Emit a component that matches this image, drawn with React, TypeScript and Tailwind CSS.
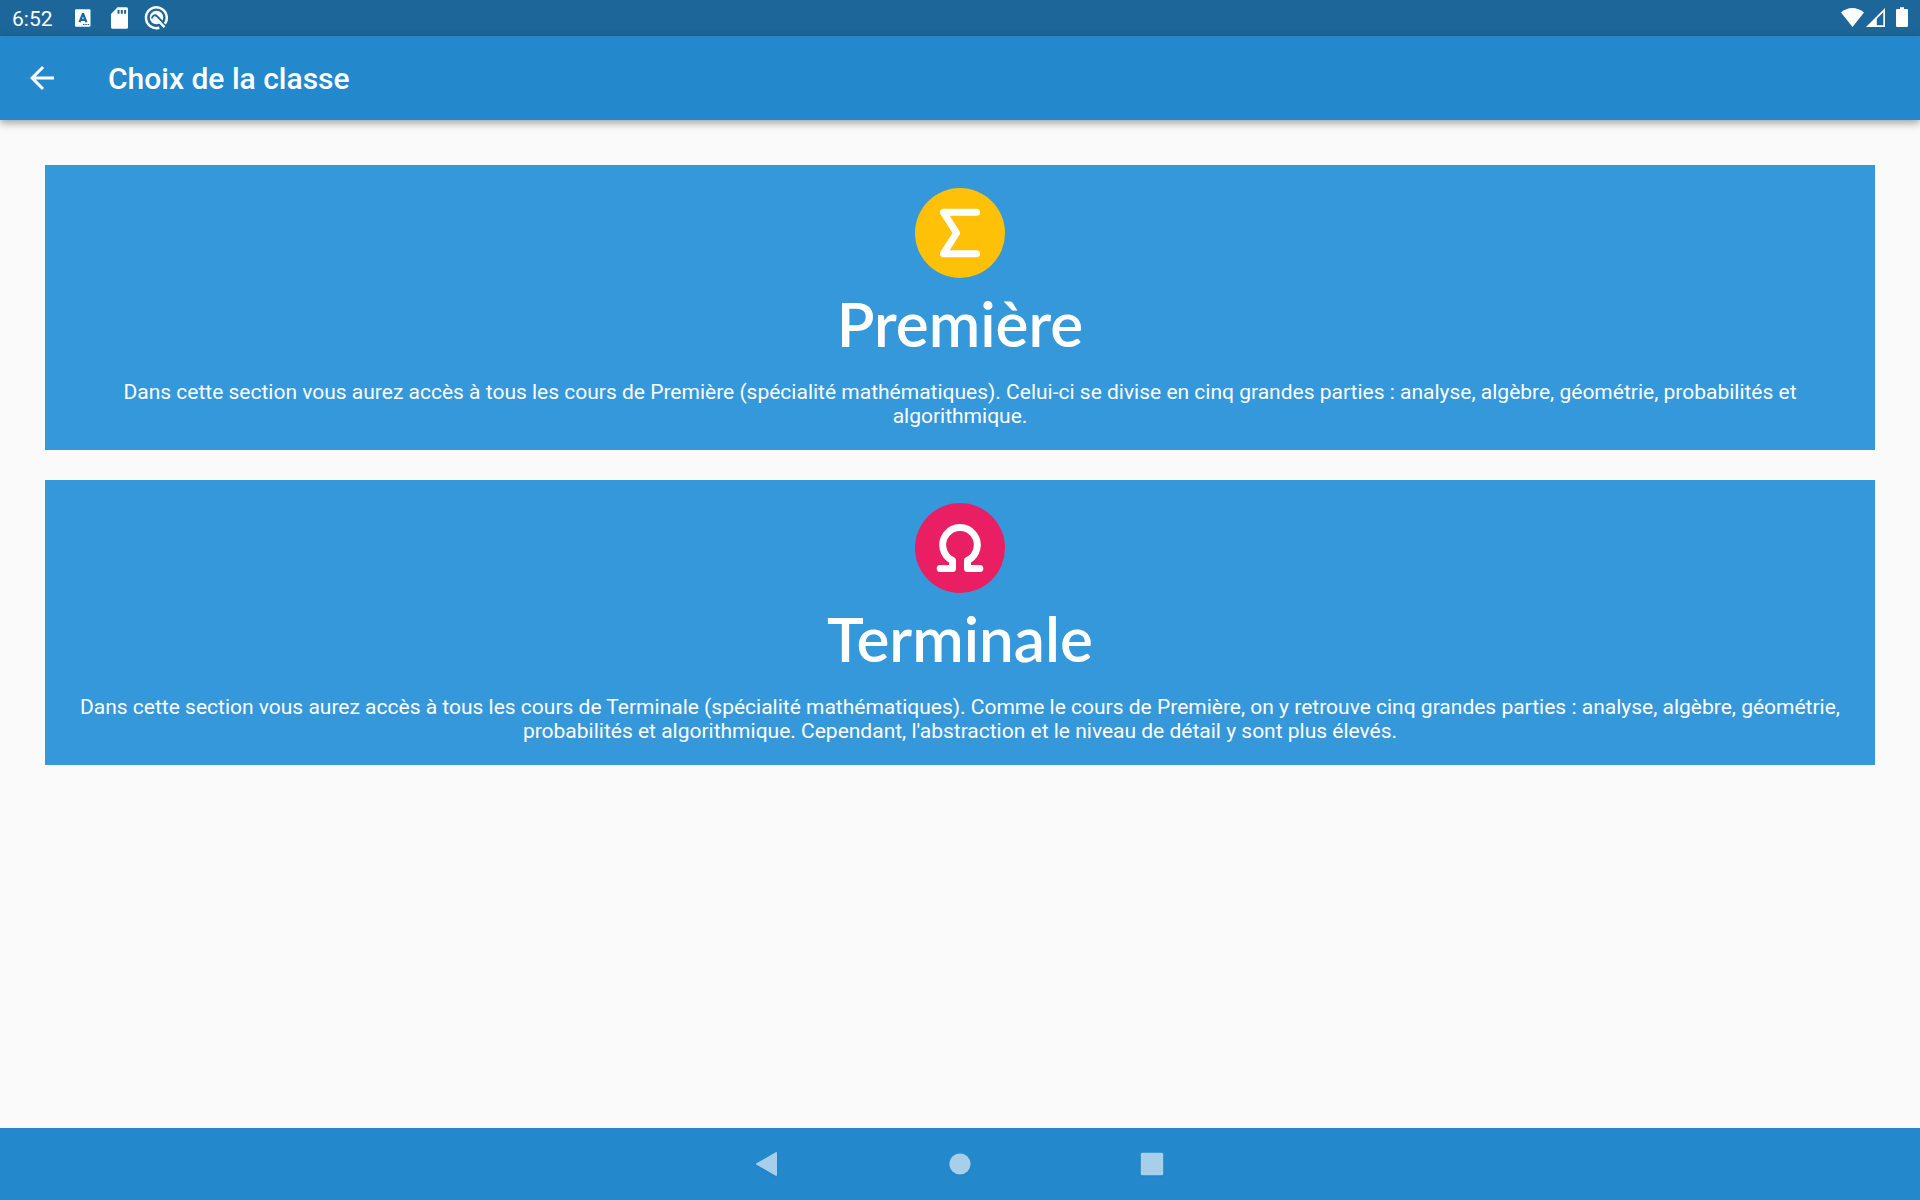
import React from "react";

type Course = { title: string; description: string; icon: React.ReactNode };

function SigmaIcon() {
  return (
    <svg viewBox="0 0 90 90" className="size-[90px]" aria-hidden="true">
      <circle cx="45" cy="45" r="45" fill="#FFC107" />
      <path
        d="M61.5 24.3H28.5L41.5 45L28.5 65.7H61.5"
        fill="none"
        stroke="#fff"
        strokeWidth="7"
        strokeLinecap="round"
        strokeLinejoin="round"
      />
    </svg>
  );
}

function OmegaIcon() {
  return (
    <svg viewBox="0 0 90 90" className="size-[90px]" aria-hidden="true">
      <circle cx="45" cy="45" r="45" fill="#E91E63" />
      <path
        d="M25.2 65.5H37.5V57.5A17.3 17.3 0 1 1 52.5 57.5V65.5H64.8"
        fill="none"
        stroke="#fff"
        strokeWidth="7"
        strokeLinecap="round"
        strokeLinejoin="round"
      />
    </svg>
  );
}

const courses: Course[] = [
  {
    title: "Première",
    description:
      "Dans cette section vous aurez accès à tous les cours de Première (spécialité mathématiques). Celui-ci se divise en cinq grandes parties : analyse, algèbre, géométrie, probabilités et algorithmique.",
    icon: <SigmaIcon />,
  },
  {
    title: "Terminale",
    description:
      "Dans cette section vous aurez accès à tous les cours de Terminale (spécialité mathématiques). Comme le cours de Première, on y retrouve cinq grandes parties : analyse, algèbre, géométrie, probabilités et algorithmique. Cependant, l'abstraction et le niveau de détail y sont plus élevés.",
    icon: <OmegaIcon />,
  },
];

function StatusBar() {
  return (
    <div className="flex h-9 items-center justify-between bg-[#1C6699] px-3 text-white">
      <div className="flex items-center gap-px">
        <span className="mr-[11px] pt-0.5 text-[21px] leading-6">6:52</span>
        <svg viewBox="0 0 36 36" className="size-9" aria-hidden="true">
          <rect x="10" y="9.3" width="15.5" height="17.4" rx="1.2" fill="#fff" />
          <path d="M14.6 22.2L17.8 14H18.2L21.4 22.2M15.8 19.8H20.2" fill="none" stroke="#1C6699" strokeWidth="2.2" />
          <path d="M18 24.5H24.2" stroke="#1C6699" strokeWidth="1.1" strokeDasharray="1.5 0.8" />
        </svg>
        <svg viewBox="0 0 36 36" className="size-9" aria-hidden="true">
          <path d="M15.5 7.3H24.5A1.5 1.5 0 0 1 26 8.800V27.3A1.5 1.5 0 0 1 24.5 28.8H10.500A1.5 1.5 0 0 1 9 27.3V14Z" fill="#fff" />
          <path d="M16.5 10V13.8M19.8 10V13.8M23.1 10V13.8" stroke="#1C6699" strokeWidth="2" />
        </svg>
        <svg viewBox="0 0 36 36" className="size-9" fill="none" stroke="#fff" aria-hidden="true">
          <path d="M20.300 27.700A10.400 10.400 0 1 1 25.800 23.800" strokeWidth="2.500" />
          <circle cx="17.500" cy="17.500" r="6.800" fill="#fff" stroke="none" />
          <path d="M13 18.500C13.200 14.800 16.600 14.500 18.200 16.300L24.500 23" stroke="#1C6699" strokeWidth="1.900" />
          <path d="M19 20.500L25.500 27.200" strokeWidth="2.500" />
        </svg>
      </div>
      <svg viewBox="0 0 72 36" className="h-9 w-[72px]" aria-hidden="true">
        <path d="M5 12.500C11.500 6.500 21 6.500 28 12.500L16.500 27Z" fill="#fff" />
        <path d="M30 27L49 8V27ZM40.800 18.700V25.300H47.300V12.200Z" fill="#fff" fillRule="evenodd" />
        <path
          d="M64 7.200H68V9H70.800A1.200 1.200 0 0 1 72 10.200V25.700A1.200 1.200 0 0 1 70.800 26.900H61.200A1.200 1.200 0 0 1 60 25.700V10.200A1.200 1.200 0 0 1 61.200 9H64Z"
          fill="#fff"
        />
      </svg>
    </div>
  );
}

function CourseCard({ title, description, icon }: Course) {
  return (
    <button
      type="button"
      className="flex w-full flex-col items-center bg-[#3498DB] px-[22px] pt-[23px] pb-[22px] text-center text-white"
    >
      {icon}
      <h2 className="font-['Lato',sans-serif] text-[62px] leading-[90px] font-semibold">{title}</h2>
      <p className="mt-3 text-[21px] leading-6">{description}</p>
    </button>
  );
}

function NavigationBar() {
  return (
    <nav className="flex h-[72px] items-center justify-center gap-[156px] bg-[#2488CD] text-[#A7CFEA]">
      <button type="button" aria-label="Précédent">
        <svg viewBox="0 0 36 36" className="size-9 drop-shadow-xs" fill="currentColor" aria-hidden="true">
          <path d="M25.700 6.200Q27 5.700 27 7V29Q27 30.300 25.700 29.800L6.500 18.700Q5.500 18 6.500 17.300Z" />
        </svg>
      </button>
      <button type="button" aria-label="Accueil">
        <svg viewBox="0 0 36 36" className="size-9 drop-shadow-xs" fill="currentColor" aria-hidden="true">
          <circle cx="18" cy="18" r="10.600" />
        </svg>
      </button>
      <button type="button" aria-label="Applications récentes">
        <svg viewBox="0 0 36 36" className="size-9 drop-shadow-xs" fill="currentColor" aria-hidden="true">
          <rect x="6.800" y="6.800" width="22.400" height="22.400" rx="1.500" />
        </svg>
      </button>
    </nav>
  );
}

export default function App() {
  return (
    <div className="flex min-h-screen flex-col bg-[#FAFAFA] font-['Roboto',sans-serif]">
      <StatusBar />
      <header className="flex h-[84px] items-center bg-[#2488CD] px-6 text-white shadow-[0_3px_8px_rgba(0,0,0,0.36)]">
        <button type="button" aria-label="Retour" className="size-9">
          <svg viewBox="0 0 24 24" className="size-9" fill="currentColor" aria-hidden="true">
            <path d="M20 11H7.830l5.590-5.590L12 4l-8 8 8 8 1.410-1.410L7.830 13H20v-2z" />
          </svg>
        </button>
        <h1 className="ml-12 pt-0.5 text-[30px] leading-9 font-medium">Choix de la classe</h1>
      </header>
      <main className="flex flex-1 flex-col gap-[30px] p-[45px]">
        {courses.map((course) => (
          <CourseCard key={course.title} {...course} />
        ))}
      </main>
      <NavigationBar />
    </div>
  );
}
